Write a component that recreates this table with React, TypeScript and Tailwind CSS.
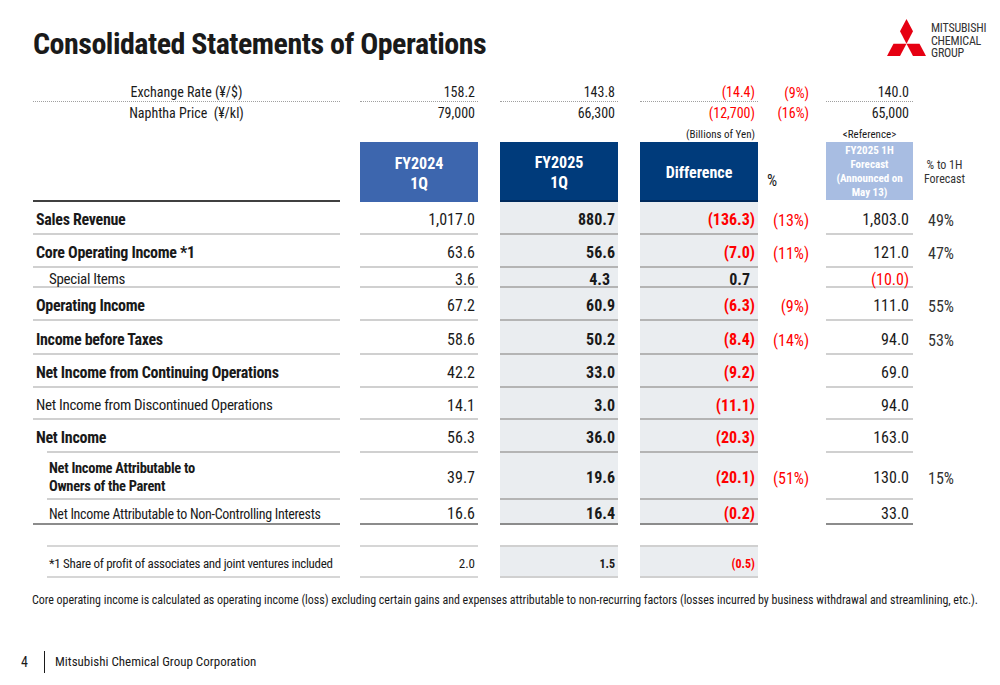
import type { ReactNode } from "react";

type Row = {
  label: ReactNode;
  bold?: boolean;
  lp: string;
  lineIndent?: boolean;
  inset?: boolean;
  h: string;
  v: [string, string, string, string, string, string];
  dark?: boolean;
};

const ROWS: Row[] = [
  { label: "Sales Revenue", bold: true, lp: "pl-[3px]", h: "h-[33px]", v: ["1,017.0", "880.7", "(136.3)", "(13%)", "1,803.0", "49%"] },
  { label: "Core Operating Income *1", bold: true, lp: "pl-[3px]", h: "h-[33px]", v: ["63.6", "56.6", "(7.0)", "(11%)", "121.0", "47%"] },
  { label: "Special Items", lp: "pl-[16px]", inset: true, h: "h-[20px]", v: ["3.6", "4.3", "0.7", "", "(10.0)", ""] },
  { label: "Operating Income", bold: true, lp: "pl-[3px]", h: "h-[33px]", v: ["67.2", "60.9", "(6.3)", "(9%)", "111.0", "55%"] },
  { label: "Income before Taxes", bold: true, lp: "pl-[3px]", h: "h-[34px]", v: ["58.6", "50.2", "(8.4)", "(14%)", "94.0", "53%"] },
  { label: "Net Income from Continuing Operations", bold: true, lp: "pl-[3px]", h: "h-[33px]", v: ["42.2", "33.0", "(9.2)", "", "69.0", ""] },
  { label: "Net Income from Discontinued Operations", lp: "pl-[3px]", h: "h-[32px]", v: ["14.1", "3.0", "(11.1)", "", "94.0", ""] },
  { label: "Net Income", bold: true, lp: "-ml-[11px]", lineIndent: true, h: "h-[33px]", v: ["56.3", "36.0", "(20.3)", "", "163.0", ""] },
  {
    label: (
      <span className="block leading-[18px] text-[14.5px] tracking-[-0.3px]">
        Net Income Attributable to
        <br />
        Owners of the Parent
      </span>
    ),
    bold: true,
    lp: "pl-[2px]",
    lineIndent: true,
    h: "h-[47px]",
    v: ["39.7", "19.6", "(20.1)", "(51%)", "130.0", "15%"],
  },
  {
    label: <span className="text-[14px]">Net Income Attributable to Non-Controlling Interests</span>,
    lp: "pl-[16px]",
    dark: true,
    h: "h-[25px]",
    v: ["16.6", "16.4", "(0.2)", "", "33.0", ""],
  },
];

const red = (s: string) => (s.startsWith("(") ? "text-[#ff0000]" : "");

function BodyRow({ r }: { r: Row }) {
  const line = r.dark ? "border-[#8c8c8c]" : "border-[#d0d0d0]";
  const grayLine = r.dark ? "border-[#8c8c8c]" : "border-[#b4b4b4]";
  const boldPad = r.inset ? "pr-[8px]" : "pr-[3px]";
  return (
    <div className={`flex ${r.h} text-[16px] text-[#1a1a1a]`}>
      <div className={`w-[307px] flex ${r.lineIndent ? "pl-[14px]" : ""}`}>
        <div
          className={`flex-1 flex items-center pt-[5px] whitespace-nowrap border-b-2 ${line} ${
            r.bold ? "font-bold text-[16px] tracking-[-0.3px]" : "text-[15px] tracking-[-0.3px]"
          }`}
        >
          <div className={r.lp}>{r.label}</div>
        </div>
      </div>
      <div className={`ml-[20px] w-[118px] flex items-center justify-end pt-[5px] pr-[3px] border-b-2 ${line}`}>{r.v[0]}</div>
      <div className={`ml-[22px] w-[118px] flex items-center justify-end pt-[5px] ${boldPad} bg-[#eaedf0] font-bold border-b-2 ${grayLine}`}>
        {r.v[1]}
      </div>
      <div
        className={`ml-[22px] w-[118px] flex items-center justify-end pt-[5px] ${boldPad} bg-[#eaedf0] font-bold border-b-2 ${grayLine} ${red(r.v[2])}`}
      >
        {r.v[2]}
      </div>
      <div className="w-[68px] flex items-center justify-end pt-[5px] pr-[17px] text-[#ff0000]">{r.v[3]}</div>
      <div className={`w-[87px] flex items-center justify-end pt-[5px] pr-[4px] border-b-2 ${line} ${red(r.v[4])}`}>{r.v[4]}</div>
      <div className="w-[57px] flex items-center pt-[5px] pl-[15px] text-[#333333]">{r.v[5]}</div>
    </div>
  );
}

function TopRow({ label, v, dotted, h }: { label: string; v: string[]; dotted?: boolean; h: string }) {
  const b = dotted ? "border-b border-dotted border-[#a0a0a0]" : "";
  return (
    <div className={`flex ${h} text-[14px] text-[#1a1a1a]`}>
      <div className={`w-[307px] flex items-center justify-center whitespace-pre ${b}`}>{label}</div>
      <div className={`ml-[20px] w-[118px] flex items-center justify-end pr-[3px] ${b}`}>{v[0]}</div>
      <div className={`ml-[22px] w-[118px] flex items-center justify-end pr-[3px] ${b}`}>{v[1]}</div>
      <div className={`ml-[22px] w-[118px] flex items-center justify-end pr-[3px] text-[#ff0000] ${b}`}>{v[2]}</div>
      <div className="w-[68px] flex items-center justify-end pr-[17px] text-[#ff0000]">{v[3]}</div>
      <div className={`w-[87px] flex items-center justify-end pr-[4px] ${b}`}>{v[4]}</div>
    </div>
  );
}

function Logo() {
  return (
    <div className="flex items-start gap-[5px]">
      <svg width="39" height="37" viewBox="0 0 30 26" preserveAspectRatio="none">
        <path fill="#e60012" d="M15 17.32 L10 8.66 L15 0 L20 8.66 Z" />
        <path fill="#e60012" d="M15 17.32 L5 17.32 L0 25.98 L10 25.98 Z" />
        <path fill="#e60012" d="M15 17.32 L25 17.32 L30 25.98 L20 25.98 Z" />
      </svg>
      <div className="w-[50px] pt-[3px] flex flex-col text-[12px] leading-[12.5px] tracking-[-0.2px] text-[#333333]">
        <span>MITSUBISHI</span>
        <span>CHEMICAL</span>
        <span>GROUP</span>
      </div>
    </div>
  );
}

export default function App() {
  return (
    <div className="w-[1000px] h-[685px] bg-white overflow-hidden flex flex-col font-['Roboto_Condensed','Roboto',sans-serif] font-stretch-condensed text-[#1a1a1a]">
      {/* header */}
      <div className="h-[84px] flex justify-between pl-[33px] pr-[19px]">
        <h1 className="pt-[27px] text-[30px] leading-[34px] font-bold tracking-[-0.5px]">Consolidated Statements of Operations</h1>
        <div className="pt-[19px]">
          <Logo />
        </div>
      </div>

      {/* table */}
      <div className="ml-[33px] flex flex-col">
        <TopRow label="Exchange Rate (¥/$)" v={["158.2", "143.8", "(14.4)", "(9%)", "140.0"]} dotted h="h-[18px]" />
        <TopRow label="Naphtha Price  (¥/kl)" v={["79,000", "66,300", "(12,700)", "(16%)", "65,000"]} h="h-[22px]" />

        <div className="flex h-[18px] items-end text-[11px] leading-[14px] text-[#1a1a1a]">
          <div className="w-[307px]" />
          <div className="ml-[20px] w-[118px]" />
          <div className="ml-[22px] w-[118px]" />
          <div className="ml-[22px] w-[118px] text-right pr-[3px]">(Billions of Yen)</div>
          <div className="w-[68px]" />
          <div className="w-[87px] text-center">&lt;Reference&gt;</div>
        </div>

        <div className="flex h-[60px]">
          <div className="w-[307px] border-b-2 border-[#404040]" />
          <div className="ml-[20px] w-[118px] bg-[#3d66ae] pt-[4px] flex flex-col items-center justify-center text-white font-bold text-[16px] leading-[20px]">
            <span>FY2024</span>
            <span>1Q</span>
          </div>
          <div className="ml-[22px] w-[118px] bg-[#003b7b] pt-[4px] border-b-2 border-[#002a5c] flex flex-col items-center justify-center text-white font-bold text-[16px] leading-[20px]">
            <span>FY2025</span>
            <span>1Q</span>
          </div>
          <div className="ml-[22px] w-[118px] bg-[#003b7b] pt-[4px] border-b-2 border-[#002a5c] flex items-center justify-center text-white font-bold text-[16px]">
            Difference
          </div>
          <div className="w-[68px] flex items-end pb-[9px] pl-[9px] text-[16px]">%</div>
          <div className="w-[87px] mb-[2px] pt-[2px] bg-[#a8bde2] flex flex-col items-center justify-center text-white font-bold text-[11px] leading-[14px] text-center">
            <span>FY2025 1H</span>
            <span>Forecast</span>
            <span>(Announced on</span>
            <span>May 13)</span>
          </div>
          <div className="w-[57px] flex flex-col items-center justify-center pl-[6px] text-[12px] leading-[14px] text-[#333333]">
            <span>% to 1H</span>
            <span>Forecast</span>
          </div>
        </div>

        {ROWS.map((r, i) => (
          <BodyRow key={i} r={r} />
        ))}

        <div className="h-[20px]" />

        <div className="flex h-[33px] text-[#1a1a1a]">
          <div className="w-[307px] pl-[14px] flex">
            <div className="flex-1 flex items-center pt-[4px] pl-[2px] whitespace-nowrap border-y-2 border-[#d6d6d6] text-[13px] tracking-[-0.3px]">
              *1 Share of profit of associates and joint ventures included
            </div>
          </div>
          <div className="ml-[20px] w-[118px] flex items-center justify-end pt-[4px] pr-[3px] border-y-2 border-[#d6d6d6] text-[13px]">2.0</div>
          <div className="ml-[22px] w-[118px] flex items-center justify-end pt-[4px] pr-[3px] bg-[#eaedf0] border-y-2 border-[#d0d0d0] font-bold text-[12px]">
            1.5
          </div>
          <div className="ml-[22px] w-[118px] flex items-center justify-end pt-[4px] pr-[3px] bg-[#eaedf0] border-y-2 border-[#d0d0d0] font-bold text-[12px] text-[#ff0000]">
            (0.5)
          </div>
        </div>
      </div>

      {/* note */}
      <p className="mt-[14px] pl-[32px] text-[12px] leading-[16px] tracking-[-0.04px] whitespace-nowrap text-[#1a1a1a]">
        Core operating income is calculated as operating income (loss) excluding certain gains and expenses attributable to non-recurring factors (losses incurred by business withdrawal and streamlining, etc.).
      </p>

      {/* footer */}
      <div className="mt-[43px] flex items-center h-[22px] pl-[21px] text-[13px] text-[#1a1a1a]">
        <span className="w-[23px] text-[14px]">4</span>
        <span className="w-px h-[22px] bg-[#1a1a1a]" />
        <span className="ml-[10px]">Mitsubishi Chemical Group Corporation</span>
      </div>
    </div>
  );
}
